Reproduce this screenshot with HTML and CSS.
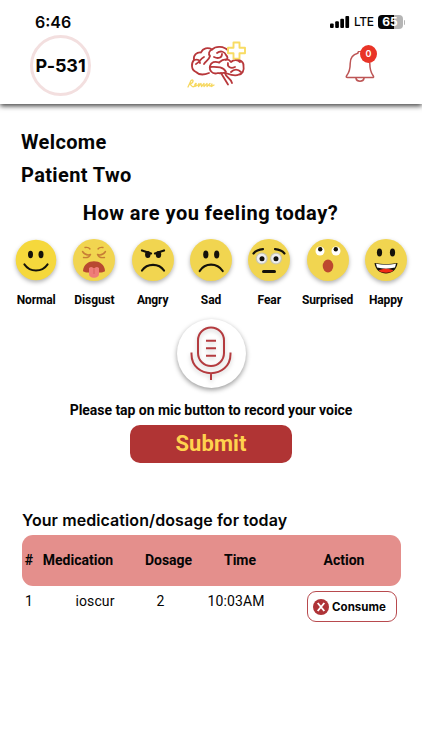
FILE: index.html
```html
<!DOCTYPE html>
<html lang="en">
<head>
<meta charset="utf-8">
<meta name="viewport" content="width=device-width, initial-scale=1">
<title>Patient home</title>
<link rel="stylesheet" href="styles.css">
</head>
<body>
<header class="header">
  <div class="status">
    <span class="clock">6:46</span>
    <div class="indicators">
      <svg class="signal" width="20" height="12" viewBox="0 0 20 12"><rect x="0" y="7.5" width="3.7" height="4.5" rx="1"/><rect x="5.2" y="5.3" width="3.7" height="6.7" rx="1"/><rect x="10.3" y="2.7" width="3.7" height="9.3" rx="1"/><rect x="15.4" y="0" width="3.7" height="12" rx="1"/></svg>
      <span class="network">LTE</span>
      <span class="battery">65</span>
      <span class="battery-tip"></span>
    </div>
  </div>
  <div class="bar">
    <div class="patient-id">P-531</div>
    <svg class="logo" width="72" height="60" viewBox="0 0 72 60" fill="none" stroke-linecap="round" stroke-linejoin="round">
      <g stroke="#b8383b" stroke-width="1.8">
        <path d="M29 38C24 40 19 40 16 37C11 35 11 28 14 25C13 20 17 17 21 17.500C23 13 28 12 32 14.500C36 10.500 44 11 48 15.500"/>
        <path d="M56 24.500C60 24.500 64 27 63.500 31C64.500 36 62 39 59 39.500C55 41.500 51 40 47 38.500C43 37 41 39 38 38C32 40 29 35 30 31C31 27 35 26 39 27.500"/>
        <path d="M32 14.500C29 16 28 19 30 21M14 25C18 24 20 25 20 28M24 22C20 24 20 27 16 29M30 21C29 25 26 26 24 29M37 18C41 15 45 17 46 20M34 22C38 24 42 23 42 19M46 20C48 22 48 24 46 25M39 27.500C44 23 49 24 51 27C54 24 58 25 60 27M48 28C47 32 51 34 55 32M30 32C36 32 43 31 46 37M51 37C54 34 58 34 61 37"/>
        <path d="M41 38L48 49.500M45 38C46 43 51 43 52 48"/>
      </g>
      <path d="M53.500 7.500h6v5.300h5.500v5.500h-5.500v5.300h-6v-5.300h-5.500v-5.500h5.500z" stroke="#f8dc63" stroke-width="1.900"/>
      <path d="M8 52L11 45.500C14 43.500 14 48 9.500 49C11 49 12 53 14 51.500L16 49.500C17 47.500 14 48 15 51.500L18 50L19 48.500L18.500 51.500L21 48.500L21.500 51.500L24 48.500L24 51.500L27 48.500L27 51.500L30 48.500C28 50 30 53 32 49L31.500 51.500L34 50" stroke="#f6d860" stroke-width="1.300"/>
    </svg>
    <div class="alerts">
      <svg width="30" height="36" viewBox="0 0 30 36" fill="none" stroke="#bd5555" stroke-width="1.500" stroke-linecap="round" stroke-linejoin="round"><path d="M12.800 2.300C13 -.5 17 -.5 17.200 2.300M12.800 2.300C7.500 3.500 5.200 7.500 5.200 12.500C5.200 18.500 4.500 21 1.800 24.500C.8 26 1.200 26.500 2.500 26.500H27C28.800 26.500 29 26 28 24.500C25.500 21 24.800 18.500 24.800 12.500C24.800 7.500 22.500 3.500 17.200 2.300M11 27.500C11.800 31 18.200 31 19 27.500"/></svg>
      <span class="count">0</span>
    </div>
  </div>
</header>
<main class="content">
  <h1 class="greeting">Welcome</h1>
  <h1 class="greeting name">Patient Two</h1>
  <h2 class="question">How are you feeling today?</h2>
  <div class="moods">
    <div class="mood"><svg viewBox="0 0 42 42"><circle class="face plain" cx="21" cy="21" r="20.300"/><ellipse cx="15.500" cy="15.500" rx="2.500" ry="3.700"/><ellipse cx="26" cy="15.500" rx="2.500" ry="3.700"/><path class="line" d="M9.500 25.500C15 33.500 27 33.500 32.500 25.500"/></svg><span>Normal</span></div>
    <div class="mood"><svg viewBox="0 0 42 42"><circle class="face" cx="21" cy="21" r="21"/><path class="frown" d="M12 8.500c3-.5 4 0 5 1.500M30 8.500c-3-.5-4 0-5 1.500M9.500 12.500c2 3 5 4 8 3M10.500 18.500c3 .5 6-.5 7-3M32.500 12.500c-2 3-5 4-8 3M31.500 18.500c-3 .5-6-.5-7-3"/><path d="M10 32C10.500 19 31.500 19 32 32C31 34.500 11 34.500 10 32" fill="#b84831"/><path d="M16 29c2-1.500 3.500-1 5 .5 1.500-1.500 3-2 5-.5v6c0 5-10 5-10 0z" fill="#ef7d79"/><path d="M21 30v5" stroke="#d9625e"/></svg><span>Disgust</span></div>
    <div class="mood"><svg viewBox="0 0 42 42"><circle class="face" cx="21" cy="21" r="21"/><ellipse cx="15.800" cy="15.500" rx="2.700" ry="3.500"/><ellipse cx="26.500" cy="15.500" rx="2.700" ry="3.500"/><path class="line" d="M10 11.500l9 3M32 11.500l-9 3M10 31.500C15 24 27 24 32 31.500"/></svg><span>Angry</span></div>
    <div class="mood"><svg viewBox="0 0 42 42"><circle class="face" cx="21" cy="21" r="21"/><ellipse cx="15.800" cy="15.500" rx="2.600" ry="3.900"/><ellipse cx="26.700" cy="15.500" rx="2.600" ry="3.900"/><path class="line" d="M9.700 32C15 23.500 27 23.500 32.700 32"/></svg><span>Sad</span></div>
    <div class="mood"><svg viewBox="0 0 42 42"><circle class="face" cx="21" cy="21" r="21"/><circle cx="13.700" cy="19.500" r="6" fill="#c9c7ae"/><circle cx="28" cy="19.500" r="6" fill="#c9c7ae"/><circle cx="13.700" cy="19.500" r="4.800" fill="#eee"/><circle cx="28" cy="19.500" r="4.800" fill="#eee"/><circle cx="14" cy="19.700" r="2.500"/><circle cx="28" cy="19.700" r="2.500"/><path class="line" d="M5.500 14.500C8 11.500 11 10.500 15 10.200M36.500 14.500C34 11.500 31 10.500 27 10.200"/><path d="M15.500 32.500h11" stroke="#14120b" stroke-width="3" stroke-linecap="round"/></svg><span>Fear</span></div>
    <div class="mood"><svg viewBox="0 0 42 42"><circle class="face" cx="21" cy="21" r="21"/><circle cx="13" cy="12" r="4.500" fill="#fff"/><circle cx="29" cy="12" r="4.500" fill="#fff"/><circle cx="13.200" cy="10.300" r="2.200"/><circle cx="28.800" cy="10.300" r="2.200"/><ellipse cx="21" cy="27" rx="5.300" ry="6.500" fill="#bd482f"/></svg><span>Surprised</span></div>
    <div class="mood"><svg viewBox="0 0 42 42"><circle class="face" cx="21" cy="21" r="21"/><ellipse cx="14.500" cy="13.500" rx="2.600" ry="3.900"/><ellipse cx="27.500" cy="13.500" rx="2.600" ry="3.900"/><path d="M9.500 24C17 25.500 25 25.500 32.500 24C31 38 11 38 9.500 24"/><path d="M11 24.700C18 26 24 26 31 24.700L30 28.500C24 30 18 30 12 28.500z" fill="#fff"/><path d="M13.500 31.500C18 29 24 29 28.500 31.500C25 34.500 17 34.500 13.500 31.500" fill="#f22b16"/></svg><span>Happy</span></div>
  </div>
  <div class="mic">
    <svg width="42" height="56" viewBox="0 0 42 56" fill="none" stroke="#b43b3f" stroke-width="2"><rect x="8" y="1.500" width="26" height="38.500" rx="13"/><path d="M1.500 26.500V28C1.500 53.500 40.500 53.500 40.500 28V26.500M21 47v7M16 14.800h10M16 22.300h10M16 29.700h10"/></svg>
  </div>
  <p class="hint">Please tap on mic button to record your voice</p>
  <button class="submit">Submit</button>
  <h3 class="table-title">Your medication/dosage for today</h3>
  <div class="row head"><span>#</span><span>Medication</span><span>Dosage</span><span>Time</span><span>Action</span></div>
  <div class="row data">
    <span>1</span><span>ioscur</span><span>2</span><span>10:03AM</span>
    <div class="action"><button class="consume"><svg width="16" height="16" viewBox="0 0 16 16"><circle cx="8" cy="8" r="8" fill="#ae3337"/><path d="M4.700 4l6.600 8M11.300 4l-6.600 8" stroke="#fff" stroke-width="1.900"/></svg><span>Consume</span></button></div>
  </div>
</main>
</body>
</html>
```
FILE: styles.css
```css
* { box-sizing: border-box; }
body { margin: 0; width: 422px; height: 750px; overflow: hidden; background: #fff; color: #050505; font-family: Roboto, sans-serif; }
h1, h2, h3, p { margin: 0; white-space: nowrap; }
button { font: inherit; color: inherit; }
.header { height: 104px; background: #fff; box-shadow: 0 2px 5px rgba(0, 0, 0, .75); font-family: Inter, sans-serif; }
.status { height: 34px; padding: 11px 17px 0 35px; display: flex; justify-content: space-between; }
.clock { font-size: 16px; line-height: 22px; font-weight: 600; }
.indicators { height: 22px; display: flex; align-items: center; }
.signal { margin-right: 1px; }
.network { font-size: 12px; line-height: 14px; font-weight: 500; letter-spacing: -.4px; margin: 0 4px 0 3px; }
.battery { width: 25px; height: 14px; border-radius: 4px; background: linear-gradient(90deg, #050505 65%, #b5b5b5 65%); color: #fff; font-size: 12px; line-height: 14px; font-weight: 700; text-align: center; }
.battery-tip { width: 1.5px; height: 5px; margin-left: 1px; border-radius: 0 2px 2px 0; background: #b5b5b5; }
.bar { height: 62px; padding: 0 44px 0 30px; display: grid; grid-template-columns: 61px 1fr 33px; align-items: center; }
.patient-id { width: 61px; height: 61px; border: 3px solid #f3dfdf; border-radius: 50%; display: flex; align-items: center; justify-content: center; font-size: 18px; font-weight: 700; letter-spacing: -.1px; white-space: nowrap; }
.logo { margin-left: 89px; }
.alerts { position: relative; width: 33px; height: 40px; padding: 6px 0 0; }
.count { position: absolute; left: 15px; top: 0; width: 17px; height: 18px; border-radius: 50%; background: #e93427; color: #fff; font-size: 9px; line-height: 18px; font-weight: 600; text-align: center; }
.content { padding: 25px 21px 0; display: flex; flex-direction: column; }
.greeting { font-size: 20px; line-height: 26px; font-weight: 700; letter-spacing: .37px; }
.name { margin-top: 7px; }
.question { margin-top: 12px; font-size: 20px; line-height: 26px; font-weight: 700; letter-spacing: .5px; align-self: center; margin-left: -1px; }
.moods { margin: 13px -14px 0; display: grid; grid-template-columns: repeat(7, 1fr); }
.mood { display: flex; flex-direction: column; align-items: center; font-size: 12px; line-height: 16px; font-weight: 700; letter-spacing: -.1px; }
.mood svg { width: 42px; height: 42px; margin-bottom: 11px; overflow: visible; fill: #14120b; filter: drop-shadow(0 2px 2px rgba(0, 0, 0, .3)); }
.mood .face { fill: #f1d550; }
.mood .plain { fill: #f5d83c; }
.line { fill: none; stroke: #14120b; stroke-width: 2.2; stroke-linecap: round; }
.frown { fill: none; stroke: #c77e35; stroke-width: 1.4; stroke-linecap: round; }
.mic { align-self: center; width: 69px; height: 69px; margin-top: 11px; border-radius: 50%; background: #fff; box-shadow: 0 2px 5px rgba(0, 0, 0, .4); display: flex; align-items: center; justify-content: center; }
.mic svg { filter: drop-shadow(0 2px 2px rgba(0, 0, 0, .2)); }
.hint { align-self: center; margin-top: 13px; font-size: 14px; line-height: 18px; font-weight: 700; letter-spacing: -.04px; }
.submit { align-self: center; width: 162px; height: 38px; margin-top: 6px; padding: 0; border: 0; border-radius: 10px; background: #b03434; color: #ffd24e; font-size: 22px; line-height: 38px; font-weight: 700; letter-spacing: .1px; }
.table-title { margin: 47px 0 0 1px; font-family: Inter, sans-serif; font-size: 16px; line-height: 20px; font-weight: 600; letter-spacing: .08px; }
.row { width: 379px; margin-left: 1px; display: grid; text-align: center; }
.head { grid-template-columns: 14px 84px 97px 46px 114px; height: 51px; margin-top: 5px; border-radius: 11px; background: #e48f8c; font-size: 14px; line-height: 51px; font-weight: 700; }
.head span:last-child { margin-left: 24px; margin-right: -24px; }
.data { grid-template-columns: 14px 118px 13px 138px 94px; font-size: 14px; line-height: 30px; letter-spacing: .1px; }
.action { padding-top: 5px; display: flex; justify-content: center; }
.consume { width: 90px; height: 31px; padding: 0 0 0 5px; border: 1.3px solid #b84a4e; border-radius: 9px; background: #fff; display: flex; align-items: center; gap: 3px; font-family: Inter, sans-serif; font-size: 11.5px; line-height: 16px; font-weight: 700; letter-spacing: .05px; }
```
